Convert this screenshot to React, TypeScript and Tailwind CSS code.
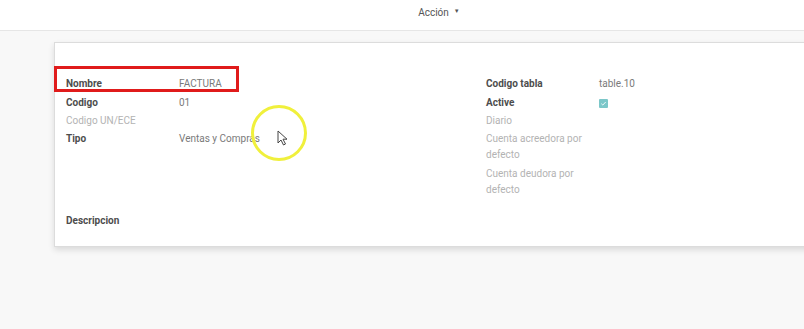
import React from 'react';

type Field = { label: string; value?: React.ReactNode; strong?: boolean };

const leftFields: Field[] = [
  { label: 'Nombre', value: 'FACTURA', strong: true },
  { label: 'Codigo', value: '01', strong: true },
  { label: 'Codigo UN/ECE' },
  { label: 'Tipo', value: 'Ventas y Compras', strong: true },
];

function ActiveBox() {
  return (
    <span className="mt-[4px] flex h-[9px] w-[9px] items-center justify-center rounded-[1px] bg-[#7cc7c9]">
      <svg width="7" height="7" viewBox="0 0 8 8" fill="none">
        <path d="M1.5 4.2 3.2 5.8 6.5 2.3" stroke="white" strokeWidth="1" />
      </svg>
    </span>
  );
}

const rightFields: Field[] = [
  { label: 'Codigo tabla', value: 'table.10', strong: true },
  { label: 'Active', value: <ActiveBox />, strong: true },
  { label: 'Diario' },
  { label: 'Cuenta acreedora por defecto' },
  { label: 'Cuenta deudora por defecto' },
];

function FieldRow({ field }: { field: Field }) {
  return (
    <div className="flex py-[1.2px] leading-[16px]">
      <div
        className={
          'w-[113px] shrink-0 pr-2 ' +
          (field.strong ? 'font-bold text-[#4d4d4d]' : 'text-[#b3b3b3]')
        }
      >
        {field.label}
      </div>
      <div className="text-[#7a7a7a]">{field.value}</div>
    </div>
  );
}

export default function App() {
  return (
    <div
      className="relative h-[329px] w-[804px] overflow-hidden bg-[#f8f8f8] text-[10px]"
      style={{ fontFamily: 'Roboto, "Liberation Sans", sans-serif' }}
    >
      <div className="flex h-[31px] justify-center border-b border-[#e6e6e6] bg-white pl-[74px] pt-[5px]">
        <span className="text-[#555]">Acción</span>
        <span className="ml-[5px] mt-[1px] text-[6px] text-[#555]">▼</span>
      </div>

      <div className="ml-[54px] mt-[11px] w-[780px] border border-[#dcdcdc] bg-white pb-[16px] pl-[11px] pt-[32px] shadow-[0_3px_6px_rgba(0,0,0,0.12)]">
        <div className="flex">
          <div className="w-[420px]">
            {leftFields.map((f) => (
              <FieldRow key={f.label} field={f} />
            ))}
          </div>
          <div className="w-[240px]">
            {rightFields.map((f) => (
              <div key={f.label} className="w-[130px]">
                <FieldRow field={f} />
              </div>
            ))}
          </div>
        </div>
        <div className="mt-[13px] font-bold leading-[18px] text-[#4d4d4d]">Descripcion</div>
      </div>

      {/* red highlight annotation */}
      <div className="absolute left-[54px] top-[66px] h-[26px] w-[185px] border-[3px] border-[#e01b1b]" />

      {/* cursor highlight */}
      <div className="absolute left-[251px] top-[105px] h-[56px] w-[56px] rounded-full border-[3px] border-[#f0f03c]" />
      <svg className="absolute left-[277px] top-[130px]" width="11" height="16" viewBox="0 0 11 16">
        <path d="M1 1v12l3-3 2.5 5 2-1-2.5-4.8H10z" fill="white" stroke="#444" strokeWidth="1" />
      </svg>
    </div>
  );
}
